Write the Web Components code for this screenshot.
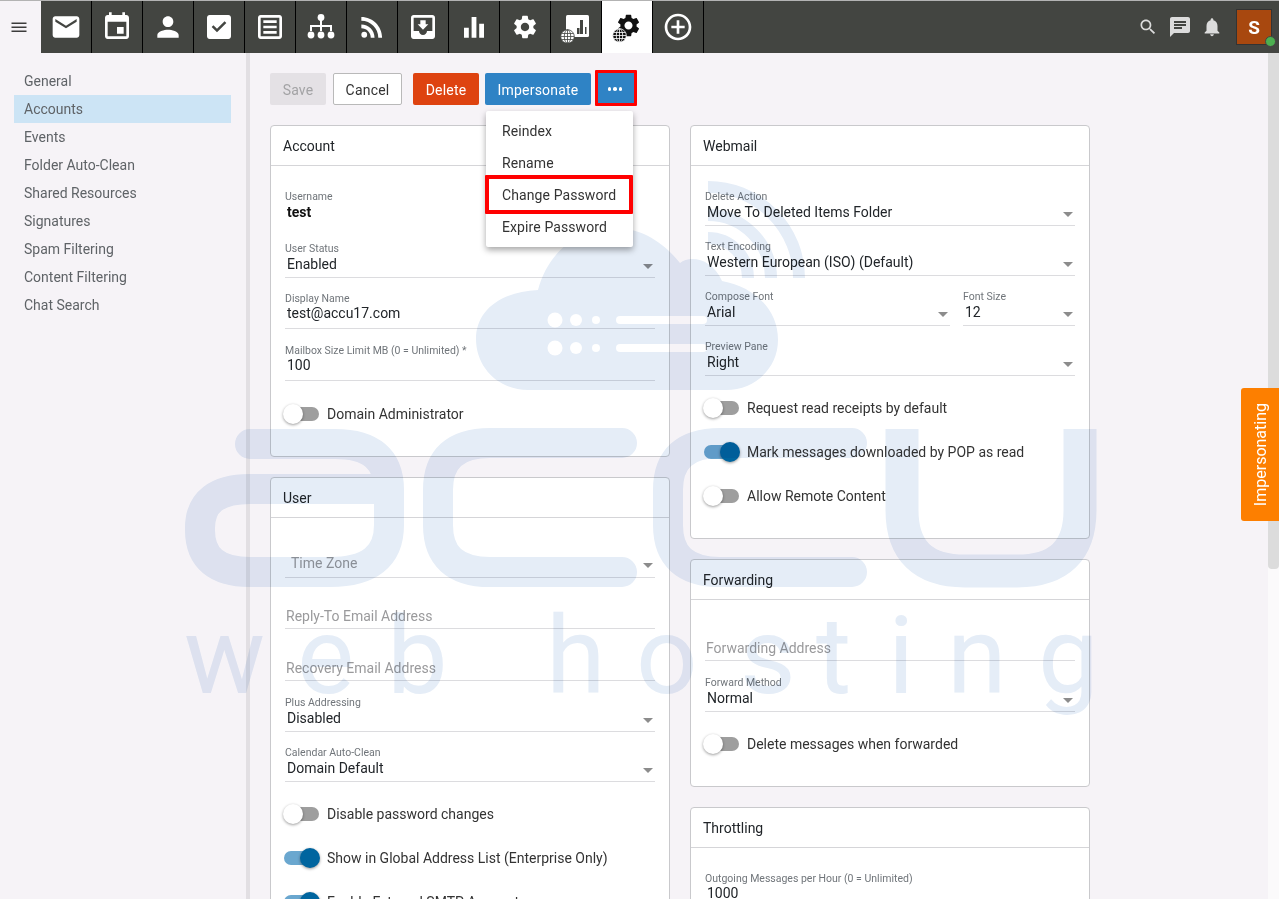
<!DOCTYPE html>
<html>
<head>
<meta charset="utf-8">
<title>Accounts</title>
<style>
html, body { margin: 0; height: 100%; overflow: hidden; }
body { background: #f6f3f7; font-family: Roboto, "Liberation Sans", sans-serif; font-size: 14px; color: #212529; }
.page { display: flex; height: 899px; overflow: hidden; }
.col { width: 400px; display: flex; flex-direction: column; gap: 20px; }
.row { display: flex; gap: 13px; }
.row ui-select:first-child { width: 245px; }
.row ui-select:last-child { width: 112px; }
</style>
</head>
<body>
<ui-topbar></ui-topbar>
<div class="page">
  <ui-sidebar></ui-sidebar>
  <ui-content>
    <ui-toolbar></ui-toolbar>
    <div class="col" slot="left">
      <ui-card heading="Account">
        <ui-input label="Username" value="test" strong></ui-input>
        <ui-select label="User Status" value="Enabled"></ui-select>
        <ui-input label="Display Name" value="test@accu17.com"></ui-input>
        <ui-input label="Mailbox Size Limit MB (0 = Unlimited) *" value="100"></ui-input>
        <ui-toggle>Domain Administrator</ui-toggle>
      </ui-card>
      <ui-card heading="User">
        <ui-select placeholder="Time Zone"></ui-select>
        <ui-input placeholder="Reply-To Email Address"></ui-input>
        <ui-input placeholder="Recovery Email Address"></ui-input>
        <ui-select label="Plus Addressing" value="Disabled"></ui-select>
        <ui-select label="Calendar Auto-Clean" value="Domain Default"></ui-select>
        <ui-toggle>Disable password changes</ui-toggle>
        <ui-toggle on>Show in Global Address List (Enterprise Only)</ui-toggle>
        <ui-toggle on>Enable External SMTP Account</ui-toggle>
      </ui-card>
    </div>
    <div class="col" slot="right">
      <ui-card heading="Webmail">
        <ui-select label="Delete Action" value="Move To Deleted Items Folder"></ui-select>
        <ui-select label="Text Encoding" value="Western European (ISO) (Default)"></ui-select>
        <div class="row">
          <ui-select label="Compose Font" value="Arial"></ui-select>
          <ui-select label="Font Size" value="12"></ui-select>
        </div>
        <ui-select label="Preview Pane" value="Right"></ui-select>
        <ui-toggle>Request read receipts by default</ui-toggle>
        <ui-toggle on>Mark messages downloaded by POP as read</ui-toggle>
        <ui-toggle>Allow Remote Content</ui-toggle>
      </ui-card>
      <ui-card heading="Forwarding">
        <ui-input placeholder="Forwarding Address"></ui-input>
        <ui-select label="Forward Method" value="Normal"></ui-select>
        <ui-toggle>Delete messages when forwarded</ui-toggle>
      </ui-card>
      <ui-card heading="Throttling">
        <ui-input label="Outgoing Messages per Hour (0 = Unlimited)" value="1000"></ui-input>
      </ui-card>
    </div>
  </ui-content>
  <ui-scrollbar></ui-scrollbar>
</div>
<ui-watermark></ui-watermark>
<ui-sidetab>Impersonating</ui-sidetab>

<script>
// material style paths, all on a 24 box
const ICONS = {
  mail: 'M20 4H4c-1.1 0-2 .9-2 2v12c0 1.1.9 2 2 2h16c1.1 0 2-.9 2-2V6c0-1.1-.9-2-2-2zm0 4l-8 5-8-5V6l8 5 8-5v2z',
  event: 'M17 12h-5v5h5v-5zM16 1v2H8V1H6v2H5c-1.11 0-1.99.9-1.99 2L3 19c0 1.1.89 2 2 2h14c1.1 0 2-.9 2-2V5c0-1.1-.9-2-2-2h-1V1h-2zm3 18H5V8h14v11z',
  person: 'M12 12c2.21 0 4-1.79 4-4s-1.79-4-4-4-4 1.79-4 4 1.79 4 4 4zm0 2c-2.67 0-8 1.34-8 4v2h16v-2c0-2.66-5.33-4-8-4z',
  task: 'M19 3H5c-1.11 0-2 .9-2 2v14c0 1.1.89 2 2 2h14c1.11 0 2-.9 2-2V5c0-1.1-.89-2-2-2zm-8.5 13l-4-4 1.3-1.3 2.7 2.7 5.7-5.7 1.3 1.3-7 7z',
  notes: 'M19 5v14H5V5h14m0-2H5c-1.1 0-2 .9-2 2v14c0 1.1.9 2 2 2h14c1.1 0 2-.9 2-2V5c0-1.1-.9-2-2-2zM7 7h10v2H7zm0 4h10v2H7zm0 4h10v2H7z',
  rss: 'M6.18 15.64a2.18 2.18 0 1 1 0 4.36 2.18 2.18 0 0 1 0-4.36zM4 4.44v2.83c7.03 0 12.73 5.7 12.73 12.73h2.83c0-8.59-6.97-15.56-15.56-15.56zm0 5.66v2.83c3.9 0 7.07 3.17 7.07 7.07h2.83c0-5.47-4.43-9.9-9.9-9.9z',
  inbox: 'M19 3H4.99c-1.11 0-1.98.89-1.98 2L3 19c0 1.1.88 2 1.99 2H19c1.1 0 2-.9 2-2V5c0-1.11-.9-2-2-2zm0 12h-4c0 1.66-1.35 3-3 3s-3-1.34-3-3H4.99V5H19v10zm-3-5h-2V7h-4v3H8l4 4 4-4z',
  bars: 'M4.5 12.5h3.6V20H4.500zM10.200 4.500h3.600V20h-3.600zM15.900 9.500h3.600V20h-3.600z',
  gear: 'M19.14 12.94c.04-.3.06-.61.06-.94 0-.32-.02-.64-.07-.94l2.03-1.58c.18-.14.23-.41.12-.61l-1.92-3.32c-.12-.22-.37-.29-.59-.22l-2.39.96c-.5-.38-1.03-.7-1.62-.94l-.36-2.54c-.04-.24-.24-.41-.48-.41h-3.84c-.24 0-.43.17-.47.41l-.36 2.54c-.59.24-1.13.57-1.62.94l-2.39-.96c-.22-.08-.47 0-.59.22L2.74 8.87c-.12.21-.08.47.12.61l2.03 1.58c-.05.3-.09.63-.09.94s.02.64.07.94l-2.03 1.58c-.18.14-.23.41-.12.61l1.92 3.32c.12.22.37.29.59.22l2.39-.96c.5.38 1.03.7 1.62.94l.36 2.54c.05.24.24.41.48.41h3.84c.24 0 .44-.17.47-.41l.36-2.54c.59-.24 1.13-.56 1.62-.94l2.39.96c.22.08.47 0 .59-.22l1.92-3.32c.12-.22.07-.47-.12-.61l-2.01-1.58zM12 15.6c-1.98 0-3.6-1.62-3.6-3.6s1.62-3.6 3.6-3.6 3.6 1.62 3.6 3.6-1.62 3.6-3.6 3.6z',
  add: 'M13 7h-2v4H7v2h4v4h2v-4h4v-2h-4V7zm-1-5C6.48 2 2 6.48 2 12s4.48 10 10 10 10-4.48 10-10S17.52 2 12 2zm0 18c-4.41 0-8-3.59-8-8s3.59-8 8-8 8 3.59 8 8-3.59 8-8 8z',
  search: 'M15.5 14h-.79l-.28-.27C15.41 12.59 16 11.11 16 9.500 16 5.910 13.090 3 9.500 3S3 5.910 3 9.500 5.910 16 9.500 16c1.610 0 3.090-.59 4.230-1.570l.27.28v.79l5 4.990L20.490 19l-4.990-5zm-6 0C7.010 14 5 11.990 5 9.500S7.010 5 9.500 5 14 7.010 14 9.500 11.990 14 9.500 14z',
  chat: 'M20 2H4c-1.1 0-1.99.9-1.99 2L2 22l4-4h14c1.1 0 2-.9 2-2V4c0-1.1-.9-2-2-2zM6 9h12v2H6V9zm8 5H6v-2h8v2zm4-6H6V6h12v2z',
  bell: 'M12 22c1.1 0 2-.9 2-2h-4c0 1.1.89 2 2 2zm6-6v-5c0-3.07-1.64-5.64-4.500-6.320V4c0-.83-.67-1.500-1.500-1.500s-1.500.67-1.500 1.500v.68C7.630 5.360 6 7.920 6 11v5l-2 2v1h16v-1l-2-2z'
};

function icon(name, size) {
  return `<svg width="${size}" height="${size}" viewBox="0 0 24 24" fill="currentColor"><path d="${ICONS[name]}"/></svg>`;
}

// small globe that sits on the admin icons
function globe(fill, line) {
  return `<svg class="globe" width="15" height="15" viewBox="0 0 15 15" fill="none" stroke="${line}" stroke-width=".8">
    <circle cx="7.500" cy="7.500" r="6.800" fill="${fill}"/>
    <ellipse cx="7.500" cy="7.500" rx="3.200" ry="6.800"/>
    <path d="M7.500 .7v13.600M1.700 4.500h11.600M.7 7.500h13.600M1.700 10.500h11.600"/>
  </svg>`;
}

class UiTopbar extends HTMLElement {
  constructor() {
    super();
    this.attachShadow({ mode: 'open' });
    this.shadowRoot.innerHTML = this.html;
  }
  get html() {
    const tabs = ['mail', 'event', 'person', 'task', 'notes', 'org', 'rss', 'inbox', 'bars', 'gear', 'domainstats', 'domainadmin', 'add'];
    const cells = tabs.map(t => {
      if (t === 'org') {
        return `<div class="tab"><svg width="32" height="32" viewBox="0 0 32 32" fill="#fff">
          <circle cx="16" cy="6.500" r="3.400"/><circle cx="6" cy="24" r="3.400"/><circle cx="16" cy="24" r="3.400"/><circle cx="26" cy="24" r="3.400"/>
          <path d="M15 9h2v5h10v6h-2v-4H17v4h-2v-4H7v4H5v-6h10z"/></svg></div>`;
      }
      if (t === 'domainstats') {
        return `<div class="tab"><span class="stack">
          <svg width="24" height="23" viewBox="0 0 24 23"><rect width="23" height="22" x="1" rx="1.500" fill="#fff"/><path d="M12 13h2.500v6H12zM15 5h3v14h-3zM20 12h1.500v7H20z" fill="#434541"/></svg>
          ${globe('#fff', '#434541')}</span></div>`;
      }
      if (t === 'domainadmin') {
        return `<div class="tab active"><span class="stack gearstack">${icon('gear', 27)}${globe('#111', '#fff')}</span></div>`;
      }
      return `<div class="tab">${icon(t, t === 'gear' ? 28 : 32)}</div>`;
    }).join('');
    return `
<style>
:host { display: flex; height: 52px; border-top: 1px solid #b3b3b3; background: #434541; color: #fff; }
.menu { width: 41px; flex: none; box-sizing: border-box; padding: 0 4px 0 0; background: #f6f3f7; display: flex; align-items: center; justify-content: center; color: #3c3c3c; }
.tab { width: 50px; flex: none; border-right: 1px solid #000; display: flex; align-items: center; justify-content: center; }
.tab.active { background: #fff; color: #111; }
.stack { position: relative; display: block; width: 28px; height: 28px; }
.stack > svg:first-child { position: absolute; left: 3px; top: 2px; }
.gearstack > svg:first-child { left: 2px; top: -1px; }
.globe { position: absolute; left: -2px; bottom: -3px; }
.gearstack .globe { left: -1px; bottom: -2px; }
.right { margin-left: auto; display: flex; align-items: center; color: #dcdcdc; }
.right span { width: 32px; display: flex; justify-content: center; }
.avatar { position: relative; width: 34px; height: 34px; margin: 0 7px 0 8px; background: #a8480f; border: 1px solid #333; display: flex; align-items: center; justify-content: center; color: #fff; font: bold 19px Roboto, sans-serif; }
.avatar i { position: absolute; right: -5px; bottom: -3px; width: 9px; height: 9px; border-radius: 50%; background: #4caf50; border: 1px solid #434541; }
</style>
<div class="menu"><svg width="24" height="24" viewBox="0 0 24 24" fill="currentColor"><path d="M4.500 7.500h15v1.500h-15zM4.500 11.500h15v1.500h-15zM4.500 15.500h15v1.500h-15z"/></svg></div>
${cells}
<div class="right">
  <span>${icon('search', 20)}</span>
  <span>${icon('chat', 24)}</span>
  <span>${icon('bell', 22)}</span>
  <div class="avatar">S<i></i></div>
</div>`;
  }
}

class UiSidebar extends HTMLElement {
  constructor() {
    super();
    this.attachShadow({ mode: 'open' });
    const items = ['General', 'Accounts', 'Events', 'Folder Auto-Clean', 'Shared Resources', 'Signatures', 'Spam Filtering', 'Content Filtering', 'Chat Search'];
    this.shadowRoot.innerHTML = `
<style>
:host { display: block; flex: none; box-sizing: content-box; width: 217px; padding: 14px 15px 0 14px; border-right: 4px solid #e2dfe3; }
div { height: 28px; line-height: 28px; padding-left: 10px; color: #5f6367; }
.on { background: #cce4f5; }
</style>
${items.map(i => `<div class="${i === 'Accounts' ? 'on' : ''}">${i}</div>`).join('')}`;
  }
}

class UiContent extends HTMLElement {
  constructor() {
    super();
    this.attachShadow({ mode: 'open' });
    this.shadowRoot.innerHTML = `
<style>
:host { display: block; flex: 1; min-width: 0; padding: 20px 0 0 20px; overflow: hidden; }
.cols { display: flex; gap: 20px; align-items: flex-start; margin-top: 20px; }
</style>
<slot></slot>
<div class="cols"><slot name="left"></slot><slot name="right"></slot></div>`;
  }
}

class UiToolbar extends HTMLElement {
  constructor() {
    super();
    this.attachShadow({ mode: 'open' });
    this.shadowRoot.innerHTML = `
<style>
:host { display: flex; position: relative; height: 32px; align-items: flex-start; }
.btn { box-sizing: border-box; height: 32px; line-height: 32px; border: 1px solid transparent; border-radius: 2px; text-align: center; letter-spacing: .2px; color: #fff; font-size: 14px; }
.save { width: 56px; background: #e4e1e5; color: #a3a3a5; }
.cancel { width: 69px; margin-left: 7px; background: #fff; border-color: #b9b9b9; color: #333; }
.del { width: 66px; margin-left: 11px; background: #de4310; }
.imp { width: 106px; margin-left: 6px; background: #2f83c5; }
.more { box-sizing: content-box; width: 36px; height: 30px; margin: -3px 0 0 4px; border: 3px solid #f00; border-radius: 1px; background: #2f83c5; display: flex; align-items: center; justify-content: center; }
.dots { display: flex; gap: 2px; transform: translate(-1px, 1px); }
.dots i { width: 3.500px; height: 3.500px; border-radius: 50%; background: #fff; }
.menu { position: absolute; z-index: 5; left: 216px; top: 38px; width: 147px; padding: 4px 0; background: #fff; border-radius: 2px; box-shadow: 0 3px 6px rgba(0,0,0,.35); }
.menu div { height: 32px; line-height: 32px; padding-left: 16px; color: #333; letter-spacing: .1px; }
.menu .hit { box-sizing: border-box; height: 39px; margin: -4px 0 -3px -1px; width: 148px; line-height: 33px; border: 4px solid #f00; border-radius: 1px; padding-left: 13px; }
</style>
<div class="btn save">Save</div>
<div class="btn cancel">Cancel</div>
<div class="btn del">Delete</div>
<div class="btn imp">Impersonate</div>
<div class="more"><span class="dots"><i></i><i></i><i></i></span></div>
<div class="menu">
  <div>Reindex</div>
  <div>Rename</div>
  <div class="hit">Change Password</div>
  <div>Expire Password</div>
</div>`;
  }
}

class UiCard extends HTMLElement {
  constructor() {
    super();
    this.attachShadow({ mode: 'open' });
    this.shadowRoot.innerHTML = `
<style>
:host { display: block; box-sizing: border-box; background: #fff; border: 1px solid #c9c9cc; border-radius: 4px; }
header { height: 39px; line-height: 41px; padding-left: 12px; border-bottom: 1px solid #d5d5d8; color: #212529; }
.body { padding: 24px 14px 16px; }
</style>
<header>${this.getAttribute('heading')}</header>
<div class="body"><slot></slot></div>`;
  }
}

class UiSelect extends HTMLElement {
  constructor() {
    super();
    this.attachShadow({ mode: 'open' });
    const label = this.getAttribute('label') || '';
    const ph = this.getAttribute('placeholder');
    this.shadowRoot.innerHTML = `
<style>
:host { display: block; height: 50px; }
label { display: block; height: 12px; line-height: 14px; font-size: 10.5px; color: #70757a; }
.val { display: flex; align-items: center; height: 20px; padding: 0 2px 3px; border-bottom: 1px solid #dcdcdf; color: #212529; }
.ph { color: #9a9a9c; padding-left: 6px; margin-top: -1px; padding-bottom: 4px; }
i { margin-left: auto; margin-right: 0; margin-top: 4px; border: 5px solid transparent; border-top-color: #8c8c8c; border-bottom: 0; }
</style>
<label>${label}</label>
<div class="val ${ph ? 'ph' : ''}">${ph || this.getAttribute('value')}<i></i></div>`;
  }
}

class UiInput extends HTMLElement {
  constructor() {
    super();
    this.attachShadow({ mode: 'open' });
    const ph = this.getAttribute('placeholder');
    const strong = this.hasAttribute('strong');
    this.shadowRoot.innerHTML = `
<style>
:host { display: block; height: 52px; }
label { display: block; height: 12px; line-height: 14px; font-size: 10.5px; color: #70757a; }
.val { height: 18px; line-height: 18px; padding: 0 2px 6px; border-bottom: 1px solid #dcdcdf; color: #212529; }
.ph { color: #9a9a9c; padding: 3px 1px 3px; }
.strong { border-color: transparent; font-weight: 700; color: #111; padding-top: 1px; padding-bottom: 5px; }
</style>
<label>${this.getAttribute('label') || ''}</label>
<div class="val ${ph ? 'ph' : ''} ${strong ? 'strong' : ''}">${ph || this.getAttribute('value')}</div>`;
  }
}

class UiToggle extends HTMLElement {
  constructor() {
    super();
    this.attachShadow({ mode: 'open' });
    this.shadowRoot.innerHTML = `
<style>
:host { display: flex; align-items: center; height: 36px; margin-bottom: 8px; color: #333; }
.sw { position: relative; width: 35px; height: 14px; margin: 0 8px 0 -1px; border-radius: 7px; background: #9e9e9e; flex: none; }
.sw i { position: absolute; left: -1px; top: -3px; width: 20px; height: 20px; border-radius: 50%; background: #fff; box-shadow: 0 1px 3px rgba(0,0,0,.4); }
:host([on]) .sw { background: #6aa7cf; }
:host([on]) .sw i { left: auto; right: -1px; background: #00659f; }
</style>
<span class="sw"><i></i></span><slot></slot>`;
  }
}

class UiScrollbar extends HTMLElement {
  constructor() {
    super();
    this.attachShadow({ mode: 'open' });
    this.shadowRoot.innerHTML = `
<style>
:host { display: block; flex: none; width: 11px; background: #fbfafb; }
div { height: 516px; background: #dcdcdc; border-radius: 0 0 4px 4px; }
</style>
<div></div>`;
  }
}

// tab stuck on the right edge, lies over the page
class UiSidetab extends HTMLElement {
  constructor() {
    super();
    this.attachShadow({ mode: 'open' });
    this.shadowRoot.innerHTML = `
<style>
:host { position: absolute; z-index: 6; right: 0; top: 388px; width: 38px; height: 133px; background: #fd7f00; border-radius: 3px 0 0 3px; color: #fff; display: flex; align-items: center; justify-content: center; }
span { writing-mode: vertical-rl; transform: rotate(180deg); font: 16px Roboto, sans-serif; }
</style>
<span><slot></slot></span>`;
  }
}

// big logo laid over the whole page, multiplied so the text below stays readable
class UiWatermark extends HTMLElement {
  constructor() {
    super();
    this.attachShadow({ mode: 'open' });
    this.shadowRoot.innerHTML = `
<style>
:host { position: absolute; left: 0; top: 0; z-index: 3; width: 1279px; height: 899px; pointer-events: none; mix-blend-mode: multiply; }
svg { display: block; }
text { font-family: Roboto, sans-serif; font-size: 108px; fill: #e5edf7; }
</style>
<svg width="1279" height="899" viewBox="0 0 1279 899">
  <defs>
    <mask id="holes" maskUnits="userSpaceOnUse" x="0" y="0" width="1279" height="899">
      <rect width="1279" height="899" fill="#fff"/>
      <g fill="#000">
        <circle cx="555" cy="320" r="7.500"/><circle cx="576" cy="320" r="6"/><circle cx="596" cy="320" r="4"/>
        <rect x="616" y="316" width="91" height="8" rx="4"/>
        <circle cx="555" cy="348" r="7.500"/><circle cx="576" cy="348" r="6"/><circle cx="596" cy="348" r="4"/>
        <rect x="616" y="344" width="91" height="8" rx="4"/>
      </g>
    </mask>
  </defs>
  <path mask="url(#holes)" fill="#e5edf7" d="M528 390C498 390 476 367 476 339C476 312 498 292 538 290C548 252 578 228 615 228C642 228 664 243 680 263C690 255 712 258 722 281C755 287 778 310 778 340C778 368 755 390 726 390Z"/>
  <g fill="none" stroke="#e5edf7" stroke-width="12">
    <path d="M708 187A91 91 0 0 1 799 278"/>
    <path d="M708 215A63 63 0 0 1 771 278"/>
    <path d="M708 238A40 40 0 0 1 748 278"/>
  </g>
  <g fill="none" stroke="#e5edf7" stroke-width="30" stroke-linecap="round">
    <path d="M250 444H335Q389 444 389 490V525Q389 572 330 572H250Q200 572 200 530V528Q200 489 250 489H389"/>
    <path d="M622 443H490Q438 443 438 490V525Q438 572 490 572H622"/>
    <path d="M852 443H720Q668 443 668 490V525Q668 572 720 572H852"/>
  </g>
  <path fill="none" stroke="#e5edf7" stroke-width="33" d="M902 429V510Q902 571 965 571H1017Q1080 571 1080 510V429"/>
  <text y="693" x="184 297 387 470 546 636 740 816 888 947 1038">web hosting</text>
</svg>`;
  }
}

customElements.define('ui-topbar', UiTopbar);
customElements.define('ui-sidebar', UiSidebar);
customElements.define('ui-content', UiContent);
customElements.define('ui-toolbar', UiToolbar);
customElements.define('ui-card', UiCard);
customElements.define('ui-select', UiSelect);
customElements.define('ui-input', UiInput);
customElements.define('ui-toggle', UiToggle);
customElements.define('ui-scrollbar', UiScrollbar);
customElements.define('ui-sidetab', UiSidetab);
customElements.define('ui-watermark', UiWatermark);
</script>
</body>
</html>
